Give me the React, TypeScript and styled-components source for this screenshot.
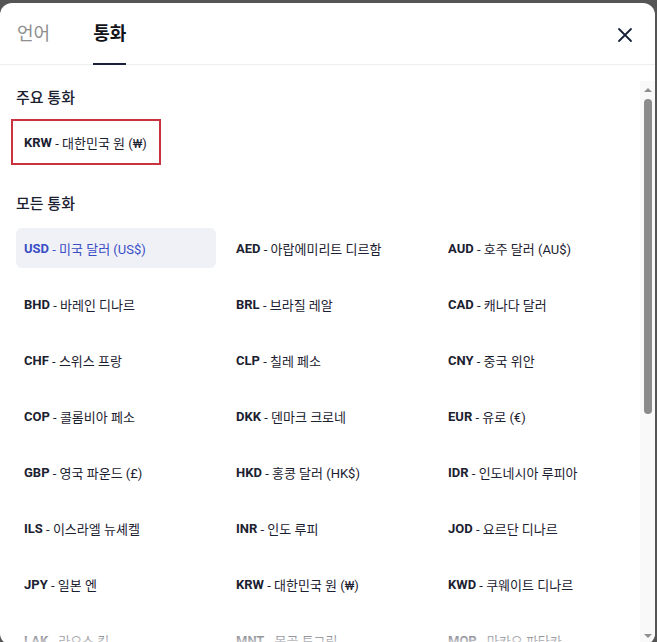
import React, { useState } from "react";
import styled, { createGlobalStyle } from "styled-components";

type Currency = { code: string; name: string };

const currencies: Currency[] = [
  { code: "USD", name: "미국 달러 (US$)" },
  { code: "AED", name: "아랍에미리트 디르함" },
  { code: "AUD", name: "호주 달러 (AU$)" },
  { code: "BHD", name: "바레인 디나르" },
  { code: "BRL", name: "브라질 레알" },
  { code: "CAD", name: "캐나다 달러" },
  { code: "CHF", name: "스위스 프랑" },
  { code: "CLP", name: "칠레 페소" },
  { code: "CNY", name: "중국 위안" },
  { code: "COP", name: "콜롬비아 페소" },
  { code: "DKK", name: "덴마크 크로네" },
  { code: "EUR", name: "유로 (€)" },
  { code: "GBP", name: "영국 파운드 (£)" },
  { code: "HKD", name: "홍콩 달러 (HK$)" },
  { code: "IDR", name: "인도네시아 루피아" },
  { code: "ILS", name: "이스라엘 뉴셰켈" },
  { code: "INR", name: "인도 루피" },
  { code: "JOD", name: "요르단 디나르" },
  { code: "JPY", name: "일본 엔" },
  { code: "KRW", name: "대한민국 원 (₩)" },
  { code: "KWD", name: "쿠웨이트 디나르" },
  { code: "LAK", name: "라오스 킵" },
  { code: "MNT", name: "몽골 투그릭" },
  { code: "MOP", name: "마카오 파타카" },
  { code: "MXN", name: "멕시코 페소" },
  { code: "MYR", name: "말레이시아 링깃" },
  { code: "NOK", name: "노르웨이 크로네" },
  { code: "NZD", name: "뉴질랜드 달러" },
  { code: "OMR", name: "오만 리알" },
  { code: "PHP", name: "필리핀 페소" },
  { code: "PLN", name: "폴란드 즐로티" },
  { code: "QAR", name: "카타르 리얄" },
  { code: "RUB", name: "러시아 루블" },
  { code: "SAR", name: "사우디아라비아 리얄" },
  { code: "SEK", name: "스웨덴 크로나" },
  { code: "SGD", name: "싱가포르 달러" },
  { code: "THB", name: "태국 바트" },
  { code: "TRY", name: "튀르키예 리라" },
  { code: "TWD", name: "신 타이완 달러" },
  { code: "VND", name: "베트남 동" },
  { code: "ZAR", name: "남아프리카 랜드" },
];

const GlobalStyle = createGlobalStyle`
  html, body {
    margin: 0;
    padding: 0;
    height: 100%;
    overflow: hidden;
    background: #555555;
  }
  body {
    font-family: Roboto, "Noto Sans CJK KR", sans-serif;
    color: #1b2130;
  }
`;

export default function App() {
  const [tab, setTab] = useState<"lang" | "currency">("currency");
  const [selected, setSelected] = useState("USD");

  return (
    <>
      <GlobalStyle />
      <Modal>
        <Header>
          <Tabs>
            <Tab $active={tab === "lang"} onClick={() => setTab("lang")}>
              언어
            </Tab>
            <Tab $active={tab === "currency"} onClick={() => setTab("currency")}>
              통화
            </Tab>
          </Tabs>
          <CloseButton aria-label="닫기">
            <svg width="16" height="16" viewBox="0 0 16 16">
              <path d="M2 2 L14 14 M14 2 L2 14" stroke="#17213a" strokeWidth="1.8" strokeLinecap="round" fill="none" />
            </svg>
          </CloseButton>
        </Header>
        <Body>
          <Scroll>
            <SectionTitle>주요 통화</SectionTitle>
            <FeaturedItem>
              <Code>KRW</Code>&nbsp;- 대한민국 원 (₩)
            </FeaturedItem>
            <SectionTitle $top={22}>모든 통화</SectionTitle>
            <Grid>
              {currencies.map((c) => (
                <Item key={c.code} $selected={c.code === selected} onClick={() => setSelected(c.code)}>
                  <Code>{c.code}</Code>&nbsp;- {c.name}
                </Item>
              ))}
            </Grid>
            <Fade />
          </Scroll>
          <ScrollBar>
            <Arrow $dir="up" />
            <Track>
              <Thumb />
            </Track>
            <Arrow $dir="down" />
          </ScrollBar>
        </Body>
      </Modal>
    </>
  );
}

const Modal = styled.div`
  margin-top: 3px;
  width: 655px;
  height: 642px;
  background: #ffffff;
  border-radius: 12px;
  display: flex;
  flex-direction: column;
  overflow: hidden;
`;

const Header = styled.div`
  height: 61px;
  flex: 0 0 auto;
  display: flex;
  align-items: stretch;
  justify-content: space-between;
  padding: 0 16px 0 17px;
  border-bottom: 1px solid #eceef1;
`;

const Tabs = styled.div`
  display: flex;
  gap: 43px;
`;

const Tab = styled.button<{ $active?: boolean }>`
  background: none;
  border: none;
  padding: 0;
  margin: 0;
  font-family: inherit;
  font-size: 18px;
  line-height: 1;
  font-weight: ${(p) => (p.$active ? 700 : 400)};
  color: ${(p) => (p.$active ? "#111318" : "#8e8e8e")};
  display: flex;
  align-items: center;
  padding-top: 1px;
  border-bottom: 2px solid ${(p) => (p.$active ? "#17213a" : "transparent")};
  margin-bottom: -1px;
  cursor: pointer;
`;

const CloseButton = styled.button`
  background: none;
  border: none;
  padding: 0;
  display: flex;
  align-items: center;
  justify-content: center;
  width: 28px;
  margin-top: 2px;
  cursor: pointer;
`;

const Body = styled.div`
  flex: 1;
  min-height: 0;
  margin-top: 16px;
  display: flex;
`;

const Scroll = styled.div`
  position: relative;
  flex: 1;
  min-width: 0;
  overflow: hidden;
  padding: 0 0 0 16px;
`;

const SectionTitle = styled.div<{ $top?: number }>`
  margin-top: ${(p) => p.$top ?? 0}px;
  height: 30px;
  display: flex;
  align-items: center;
  font-size: 15px;
  font-weight: 500;
  color: #1b2130;
`;

const Code = styled.span`
  font-weight: 700;
`;

const FeaturedItem = styled.div`
  margin: 8px 0 0 -5px;
  box-sizing: border-box;
  height: 46px;
  width: 150px;
  display: flex;
  align-items: center;
  padding: 0 11px;
  border: 2px solid #c9333d;
  font-size: 13px;
  white-space: nowrap;
`;

const Grid = styled.div`
  margin-top: 11px;
  display: grid;
  grid-template-columns: repeat(3, 200px);
  column-gap: 12px;
  row-gap: 16px;
`;

const Item = styled.div<{ $selected?: boolean }>`
  height: 40px;
  border-radius: 6px;
  display: flex;
  align-items: center;
  padding: 0 8px;
  font-size: 13px;
  white-space: nowrap;
  cursor: pointer;
  background: ${(p) => (p.$selected ? "#eff1f6" : "transparent")};
  color: ${(p) => (p.$selected ? "#3a4dc6" : "#1b2130")};
`;

const Fade = styled.div`
  position: absolute;
  left: 0;
  right: 0;
  top: 542px;
  height: 22px;
  background: linear-gradient(to bottom, rgba(255, 255, 255, 0), rgba(255, 255, 255, 0.85));
  pointer-events: none;
`;

const ScrollBar = styled.div`
  flex: 0 0 15px;
  width: 15px;
  height: 564px;
  background: #f9f9f9;
  display: flex;
  flex-direction: column;
  align-items: center;
`;

const Arrow = styled.div<{ $dir: "up" | "down" }>`
  flex: 0 0 18px;
  display: flex;
  align-items: center;
  justify-content: center;
  &::before {
    content: "";
    width: 0;
    height: 0;
    border-left: 4px solid transparent;
    border-right: 4px solid transparent;
    ${(p) =>
      p.$dir === "up"
        ? "border-bottom: 4px solid #8f8f8f;"
        : "border-top: 4px solid #8f8f8f;"}
  }
`;

const Track = styled.div`
  flex: 1;
  width: 100%;
  display: flex;
  justify-content: center;
`;

const Thumb = styled.div`
  width: 8px;
  height: 315px;
  border-radius: 4px;
  background: #8b8b8b;
`;
